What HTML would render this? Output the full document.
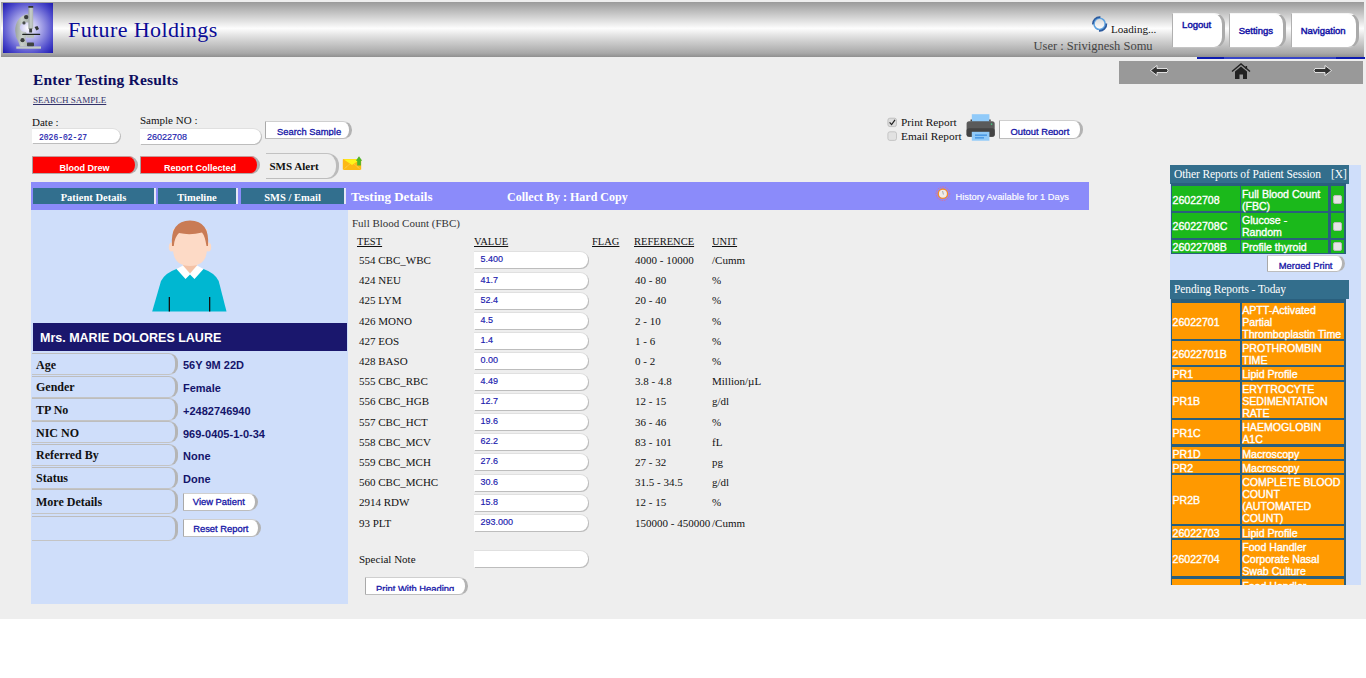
<!DOCTYPE html>
<html><head><meta charset="utf-8">
<style>
*{box-sizing:border-box;margin:0;padding:0}
html,body{width:1366px;height:678px;overflow:hidden;background:#fff;font-family:"Liberation Serif",serif}
.a{position:absolute}
#page{position:absolute;left:0;top:0;width:1366px;height:619px;background:#eeeeee}
#hdr{left:1px;top:2px;width:1363px;height:55px;background:linear-gradient(#a9a9a9 0%,#d8d8d8 25%,#ffffff 50%,#d0d0d0 75%,#9c9c9c 100%)}
#logo{left:3px;top:3px;width:50px;height:50px;background:radial-gradient(circle at 50% 50%,#ffffff 0%,#b9b7ee 30%,#4d4acb 75%,#1d19b0 100%)}
#hdr{background:linear-gradient(#9a9a9a 0%,#b3b3b3 12%,#fdfdfd 48%,#d5d5d5 68%,#a8a8a8 93%,#8f8f8f 100%)!important}
.ttl{left:68px;top:17px;font-size:22px;letter-spacing:0.4px;color:#0a0a96;white-space:nowrap}
.btn{background:#fff;border-radius:0 11px 11px 0;border-left:1px solid #b0b0b0;border-top:1px solid #f4f4f4;border-bottom:1px solid #c4c4c4;border-right:3px solid #aaaaaa;font-family:"Liberation Sans",sans-serif;color:#1414a6;font-size:9.5px;-webkit-text-stroke:0.45px #1414a6;text-align:center;overflow:hidden}
.sb{background:#fff;border-left:1px solid #a9a9a9;border-top:1px solid #cfcfcf;border-bottom:1px solid #bdbdbd;border-right:3px solid #b3b3b3}
.sbt{font-family:"Liberation Sans",sans-serif;color:#1414a6;font-size:9.4px;line-height:1.117;-webkit-text-stroke:0.3px #1414a6;white-space:nowrap}
.sbtn{background:#fff;border-top:1px solid #ddd;border-left:1px solid #ccc;border-radius:0 9px 9px 0;box-shadow:2px 1px 0 #b4b4b4;font-family:"Liberation Sans",sans-serif;color:#1515a8;font-size:9px;-webkit-text-stroke:0.3px #1515a8;text-align:center;overflow:hidden;white-space:nowrap}
.inp{background:#fff;border-radius:0 8px 8px 0;border-top:1px solid #e0e0e0;box-shadow:1px 1px 0.6px #bdbdbd;font-family:"Liberation Sans",sans-serif;color:#1a1aae;-webkit-text-stroke:0.15px #1a1aae;font-size:9px;overflow:hidden;white-space:nowrap}
.lbl{font-size:11px;color:#111;white-space:nowrap}
.rb{background:#f00;border-left:1px solid #a9a0a0;border-top:1px solid #c79a9a;border-bottom:1px solid #b5a8a8;border-right:3px solid #b0b0b0}
.rbt{font-family:"Liberation Sans",sans-serif;font-weight:bold;font-size:9px;line-height:1.117;color:#fff;white-space:nowrap}
.red{background:#f00;border-radius:0 9px 9px 0;box-shadow:2px 1px 0 #a8a8a8;border-top:1px solid #c00;border-left:1px solid #c44;color:#fff;font-family:"Liberation Sans",sans-serif;font-weight:bold;font-size:9px;text-align:center;overflow:hidden;white-space:nowrap}
#tabs{left:31px;top:182px;width:1058px;height:28px;background:#8b8bfa}
.tab{top:187.5px;height:16.5px;background:#326f8e;color:#fff;font-weight:bold;font-size:10.5px;text-align:center;line-height:20px;border-right:2px solid #e6e6f6;white-space:nowrap}
#lp{left:31px;top:210px;width:317px;height:394px;background:#cfdefa}
#nm{left:33px;top:324px;width:314px;height:28px;background:#1a176d;color:#fff;font-family:"Liberation Sans",sans-serif;font-weight:bold;font-size:12.5px;line-height:30px;padding-left:7px;white-space:nowrap}
.row{left:32px;width:145.5px;border-top:1.5px solid #bdbdbd;border-right:3px solid #b5b5b5;border-bottom:1.5px solid #c4c4c4;border-radius:0 9px 9px 0;font-weight:bold;font-size:12px;color:#111;padding-left:4px;padding-top:1.5px;white-space:nowrap}
.val{left:183px;font-family:"Liberation Sans",sans-serif;font-weight:bold;font-size:11px;color:#14146a;white-space:nowrap;margin-top:3px}
.tr{font-size:11px;color:#111;white-space:nowrap}
.trr{margin-top:3px}
.hd{font-size:10.5px;color:#111;text-decoration:underline;white-space:nowrap;margin-top:0.5px}
.vi{left:474px;width:114px;height:17px;line-height:14.5px;padding-left:6.5px;margin-top:-0.6px}
#rp{left:1170px;top:165px;width:191px;height:420px;background:#cfdefa;overflow:hidden}
.rh{left:1170px;width:179px;height:19px;background:#336e8c;color:#fff;font-size:11.5px;line-height:19px;padding-left:4px;white-space:nowrap;letter-spacing:-0.1px}
table.rt{position:absolute;border-collapse:separate;border-spacing:2px;background:#28607c;font-family:"Liberation Sans",sans-serif;font-size:10.6px;color:#fff;line-height:12px;-webkit-text-stroke:0.25px #fff}
table.rt td{padding:0 0 0 1px;vertical-align:middle}
.cl{font-family:"Liberation Sans",sans-serif;font-size:10.6px;color:#fff;line-height:12px;-webkit-text-stroke:0.35px #fff;white-space:nowrap;padding-left:0.5px}
.g1{background:#1bb91b}
.o1{background:#ff9900}
.cb{display:inline-block;width:9px;height:9px;border-radius:2px;background:#e4e4e4;border:1px solid #bbb}
</style></head><body>
<div id="page">
<div class="a" id="hdr"></div>
<div class="a" id="logo"><svg width="50" height="50" viewBox="3 3 50 50" style="position:absolute;left:0;top:0">
<defs><linearGradient id="mg" x1="0" x2="1" y1="0" y2="0"><stop offset="0" stop-color="#9aa29d"/><stop offset="0.5" stop-color="#c9d0cb"/><stop offset="1" stop-color="#aab2ad"/></linearGradient></defs>
<path d="M28.5 13.7 Q22 15 19 19 Q15 24 15.2 31 Q15.3 37 18.5 42 L20 46.5 L27.5 46.5 L27 42.5 Q25.5 41 25.5 38 L27 35 L26 32 Q20.5 32 19.8 27.5 Q20.5 23 25 22.5 L28.6 22.5 Z" fill="url(#mg)"/>
<rect x="16.3" y="46.4" width="24.7" height="2.3" fill="#c3cbc6"/>
<rect x="27" y="42.5" width="7" height="3.8" rx="0.8" fill="#3e4240"/>
<rect x="28.4" y="6.5" width="4.8" height="22.5" fill="url(#mg)"/>
<rect x="28.3" y="5.9" width="5" height="1.9" rx="0.5" fill="#2e3230"/>
<rect x="29.2" y="28.5" width="2.9" height="4" fill="#3a3e3c"/>
<rect x="22.2" y="33.7" width="18" height="1.4" rx="0.6" fill="#1e2220"/>
<rect x="26.6" y="35.1" width="7.4" height="2.6" fill="#b8c0bb"/>
<circle cx="26.2" cy="17.1" r="2.2" fill="#3a3e3c"/>
<circle cx="24" cy="22.9" r="1.6" fill="#4a4e4c"/>
<circle cx="22.5" cy="40.2" r="2.1" fill="#3a3e3c"/>
<path d="M34.5 27 L37.5 26 L39 29 L36.5 30.5 Z" fill="#333735"/>
</svg></div>
<div class="a ttl">Future Holdings</div>

<svg class="a" style="left:1091px;top:16px" width="18" height="17" viewBox="1091 16 18 17">
<circle cx="1099.6" cy="23.9" r="5.6" fill="none" stroke="#5ea2e0" stroke-width="1.6"/>
<path d="M1092.9 24.4 A6.8 6.8 0 0 1 1100.4 17.1" fill="none" stroke="#2b5a9e" stroke-width="1.7"/>
<path d="M1106.4 23.5 A6.8 6.8 0 0 1 1099 30.8" fill="none" stroke="#2b5a9e" stroke-width="1.7"/>
</svg>
<div class="a" style="left:1111px;top:23px;font-size:11.1px;color:#111;white-space:nowrap">Loading...</div>
<div class="a" style="left:1033.5px;top:38.5px;font-size:12.5px;color:#444;white-space:nowrap">User : Srivignesh Somu</div>

<div class="a btn" style="left:1172.3px;top:12.9px;width:52.7px;height:35.6px;padding-top:4.8px;padding-right:2px">Logout</div>
<div class="a btn" style="left:1228.8px;top:12.9px;width:57.2px;height:35.6px;padding-top:11.4px;padding-right:1px">Settings</div>
<div class="a btn" style="left:1290.6px;top:12.9px;width:68.1px;height:35.6px;padding-top:11.4px;padding-right:1px">Navigation</div>
<div class="a" style="left:1197px;top:57px;width:168px;height:1.6px;background:linear-gradient(90deg,#0d1bb0 0,#0d1bb0 16%,#3745c8 16%,#3745c8 83%,#0d1bb0 83%)"></div>
<div class="a" style="left:1119px;top:61px;width:244px;height:23px;background:#999"></div>
<svg class="a" style="left:1119px;top:61px" width="244" height="23" viewBox="1119 61 244 23">
<path d="M1150.5 70.5 L1157 65.5 L1157 68.5 L1167 68.5 Q1169 70.5 1167 72.5 L1157 72.5 L1157 75.5 Z" fill="#333" stroke="#fff" stroke-width="0.8" stroke-linejoin="round"/>
<path d="M1331.5 70.5 L1325 65.5 L1325 68.5 L1315 68.5 Q1313 70.5 1315 72.5 L1325 72.5 L1325 75.5 Z" fill="#333" stroke="#fff" stroke-width="0.8" stroke-linejoin="round"/>
<path d="M1232 71.5 L1241 64 L1250 71.5" fill="none" stroke="#222" stroke-width="1.4"/>
<rect x="1245.5" y="66" width="1.6" height="3" fill="#222"/>
<path d="M1235 71.5 L1241 66.5 L1247 71.5 L1247 79 L1243 79 L1243 74.5 L1239.5 74.5 L1239.5 79 L1235 79 Z" fill="#222"/>
</svg>

<div class="a" style="left:33px;top:71px;font-size:15.5px;font-weight:bold;color:#0d0d5e;letter-spacing:0.2px;white-space:nowrap">Enter Testing Results</div>
<div class="a" style="left:33px;top:94.5px;font-size:9px;color:#33336b;text-decoration:underline;white-space:nowrap">SEARCH SAMPLE</div>

<div class="a lbl" style="left:32px;top:116px">Date :</div>
<div class="a inp" style="left:32px;top:128px;width:88px;height:15px;padding-left:7px;line-height:20px;font-family:'Liberation Mono',monospace;font-size:8px"><span style="display:inline-block;transform:scale(1,1.18);transform-origin:0 13.5px;position:relative;top:-1.5px">2026-02-27</span></div>
<div class="a lbl" style="left:140px;top:114px">Sample NO :</div>
<div class="a inp" style="left:140px;top:128px;width:121px;height:16px;padding-left:7px;line-height:17px">26022708</div>
<div class="a sb" style="left:265px;top:121px;width:87.0px;height:17.6px;border-radius:0 8.8px 8.8px 0"></div><div class="a" style="left:275px;top:122px;width:83.0px;height:13.5px;overflow:hidden"><div class="sbt" style="position:absolute;left:2px;top:5.09px">Search Sample</div></div>

<div class="a rb" style="left:31.8px;top:156.4px;width:106.2px;height:18.0px;border-radius:0 9.0px 9.0px 0"></div><div class="a" style="left:57.5px;top:157.4px;width:102.2px;height:13.9px;overflow:hidden"><div class="rbt" style="position:absolute;left:2px;top:5.85px">Blood Drew</div></div>
<div class="a rb" style="left:140.4px;top:156.4px;width:119.6px;height:18.1px;border-radius:0 9.0px 9.0px 0"></div><div class="a" style="left:161.9px;top:157.4px;width:115.6px;height:13.9px;overflow:hidden"><div class="rbt" style="position:absolute;left:2px;top:5.85px">Report Collected</div></div>
<div class="a" style="left:266px;top:153px;width:73px;height:25.5px;border-top:1px solid #c2c2c2;border-right:3px solid #bbb;border-bottom:1.5px solid #bdbdbd;border-radius:0 12px 12px 0;font-size:11px;font-weight:bold;color:#111;line-height:24px;padding-left:3.5px;white-space:nowrap">SMS Alert</div>
<svg class="a" style="left:340px;top:154px" width="24" height="19" viewBox="340 154 24 19">
<rect x="342.8" y="159" width="18.4" height="11" rx="0.8" fill="#fdb913"/>
<path d="M343.5 159.3 L352 165 L360.5 159.3 Z" fill="#fff51a"/>
<path d="M343.5 169.5 L349.5 164.3 M360.5 169.5 L354.5 164.3" stroke="#ffe79a" stroke-width="0.6" stroke-dasharray="1 0.8"/>
<path d="M359 156.3 L362.2 160.7 L360.9 160.7 L360.9 165.5 L357.2 165.5 L357.2 160.7 L355.8 160.7 Z" fill="#4fb52a"/>
</svg>

<svg class="a" style="left:880px;top:108px" width="120" height="40" viewBox="880 108 120 40">
<rect x="887.9" y="118.2" width="8.6" height="8.4" rx="2" fill="#dcdcdc" stroke="#b8b8b8" stroke-width="0.8"/>
<path d="M889.6 122.3 L891.6 124.6 L895 119.8" fill="none" stroke="#222" stroke-width="1.2"/>
<rect x="887.9" y="131.8" width="8.6" height="8.6" rx="2" fill="#e2e2e2" stroke="#bdbdbd" stroke-width="0.8"/>
<rect x="971.8" y="114.2" width="17.6" height="8" fill="#90caf9"/>
<rect x="970.5" y="119.5" width="1.5" height="2" fill="#444"/>
<rect x="989.2" y="119.5" width="1.5" height="2" fill="#444"/>
<rect x="966.6" y="121.2" width="28.1" height="15.6" rx="2.5" fill="#5a5a5a"/>
<rect x="966.6" y="128.2" width="28.1" height="8.6" rx="2.5" fill="#434343"/>
<rect x="990.9" y="123.5" width="1.3" height="1.3" fill="#3ddc84"/>
<rect x="971.8" y="131.8" width="17.6" height="8.9" fill="#90caf9"/>
<rect x="975" y="134.5" width="12" height="1.3" fill="#3d8fe0"/>
<rect x="975" y="137.2" width="9" height="1.3" fill="#3d8fe0"/>
</svg>
<div class="a" style="left:901px;top:116px;font-size:11.3px;color:#111;white-space:nowrap">Print Report</div>
<div class="a" style="left:901px;top:130px;font-size:11.3px;color:#111;white-space:nowrap">Email Report</div>
<div class="a sb" style="left:999px;top:120.4px;width:84.0px;height:18.2px;border-radius:0 9.1px 9.1px 0"></div><div class="a" style="left:1008.4px;top:121.4px;width:80.0px;height:14.0px;overflow:hidden"><div class="sbt" style="position:absolute;left:2px;top:5.39px">Outout Report</div></div>

<div class="a" id="tabs"></div>
<div class="a tab" style="left:33px;width:123px">Patient Details</div>
<div class="a tab" style="left:158px;width:80px">Timeline</div>
<div class="a tab" style="left:241px;width:105px">SMS / Email</div>
<div class="a" style="left:351px;top:189px;font-size:13px;font-weight:bold;color:#fff;white-space:nowrap">Testing Details</div>
<div class="a" style="left:507px;top:189.5px;font-size:12px;font-weight:bold;color:#fff;white-space:nowrap">Collect By : Hard Copy</div>
<svg class="a" style="left:934px;top:185px" width="18" height="18" viewBox="934 185 18 18">
<circle cx="942.9" cy="193.7" r="6.8" fill="none" stroke="#e86a8a" stroke-width="0.8" stroke-dasharray="1.6 1"/>
<circle cx="942.9" cy="193.7" r="4.7" fill="#f0ebe8" stroke="#f48a2a" stroke-width="1.4"/>
<path d="M942.6 191 L943.4 194.5" stroke="#999" stroke-width="0.8"/>
</svg>
<div class="a" style="left:955.5px;top:192px;font-family:'Liberation Sans',sans-serif;font-size:9.3px;color:#fff;-webkit-text-stroke:0.15px #fff;white-space:nowrap">History Available for 1 Days</div>

<div class="a" id="lp"></div>
<div class="a" id="nm" style="top:323.4px;width:313.6px">Mrs. MARIE DOLORES LAURE</div>
<svg class="a" style="left:140px;top:210px" width="100" height="110" viewBox="140 210 100 110">
<path d="M176.5 269 Q165 273 161 281 L152.2 311.5 L226.5 311.5 L218.7 281 Q215 273 203.5 269 Z" fill="#00b7d1"/>
<path d="M183 256 L197 256 L197 267 L190 274 L183 267 Z" fill="#f4c2a6"/>
<ellipse cx="171.8" cy="247" rx="3" ry="4.5" fill="#fddac6"/>
<ellipse cx="208.2" cy="247" rx="3" ry="4.5" fill="#fddac6"/>
<path d="M173 229 L207 229 L207 250 Q206 266 190 266 Q174 266 173 250 Z" fill="#fddac6"/>
<path d="M172 246 Q170 221 190 220.6 Q210 221 208 246 L206.5 246 Q205 236 202 232.5 Q190 235.5 179 233 Q174.5 237 173.8 246 Z" fill="#c97b55"/>
<path d="M176.5 269 L183 265.5 L190 273.5 L197 265.5 L203.5 269 L194.5 279 L190 274.5 L185.5 279 Z" fill="#ffffff"/>
<rect x="168.7" y="297" width="1.3" height="14.5" fill="#111"/>
<rect x="209" y="297" width="1.3" height="14.5" fill="#111"/>
</svg>

<div class="a row" style="top:353px;height:22.2px;line-height:18px">Age</div>
<div class="a row" style="top:375.7px;height:22.2px;line-height:18px">Gender</div>
<div class="a row" style="top:398.4px;height:22.2px;line-height:18px">TP No</div>
<div class="a row" style="top:421.1px;height:22.2px;line-height:18px">NIC NO</div>
<div class="a row" style="top:443.8px;height:22.2px;line-height:18px">Referred By</div>
<div class="a row" style="top:466.5px;height:22.2px;line-height:18px">Status</div>
<div class="a row" style="top:489.2px;height:24.5px;line-height:21px">More Details</div>
<div class="a row" style="top:515.5px;height:25px"></div>
<div class="a val" style="top:356px">56Y 9M 22D</div>
<div class="a val" style="top:379px">Female</div>
<div class="a val" style="top:401.5px">+2482746940</div>
<div class="a val" style="top:424.5px">969-0405-1-0-34</div>
<div class="a val" style="top:447px">None</div>
<div class="a val" style="top:470px">Done</div>
<div class="a sb" style="left:182.5px;top:492.5px;width:75.5px;height:18.2px;border-radius:0 9.1px 9.1px 0"></div><div class="a" style="left:190.8px;top:493.5px;width:71.5px;height:15.5px;overflow:hidden"><div class="sbt" style="position:absolute;left:2px;top:3.79px">View Patient</div></div>
<div class="a sb" style="left:182.5px;top:518.6px;width:78.5px;height:18.2px;border-radius:0 9.1px 9.1px 0"></div><div class="a" style="left:191.2px;top:519.6px;width:74.5px;height:15.9px;overflow:hidden"><div class="sbt" style="position:absolute;left:2px;top:4.19px">Reset Report</div></div>

<div class="a tr" style="left:352px;top:217px;color:#333">Full Blood Count (FBC)</div>
<div class="a hd" style="left:357px;top:235px">TEST</div>
<div class="a hd" style="left:474px;top:235px">VALUE</div>
<div class="a hd" style="left:592px;top:235px">FLAG</div>
<div class="a hd" style="left:634px;top:235px">REFERENCE</div>
<div class="a hd" style="left:712px;top:235px">UNIT</div>
<div class="a tr trr" style="left:359px;top:251.0px">554 CBC_WBC</div>
<div class="a inp vi" style="top:252.0px">5.400</div>
<div class="a tr trr" style="left:635px;top:251.0px">4000 - 10000</div>
<div class="a tr trr" style="left:712px;top:251.0px">/Cumm</div>
<div class="a tr trr" style="left:359px;top:271.2px">424 NEU</div>
<div class="a inp vi" style="top:272.2px">41.7</div>
<div class="a tr trr" style="left:635px;top:271.2px">40 - 80</div>
<div class="a tr trr" style="left:712px;top:271.2px">%</div>
<div class="a tr trr" style="left:359px;top:291.4px">425 LYM</div>
<div class="a inp vi" style="top:292.4px">52.4</div>
<div class="a tr trr" style="left:635px;top:291.4px">20 - 40</div>
<div class="a tr trr" style="left:712px;top:291.4px">%</div>
<div class="a tr trr" style="left:359px;top:311.6px">426 MONO</div>
<div class="a inp vi" style="top:312.6px">4.5</div>
<div class="a tr trr" style="left:635px;top:311.6px">2 - 10</div>
<div class="a tr trr" style="left:712px;top:311.6px">%</div>
<div class="a tr trr" style="left:359px;top:331.8px">427 EOS</div>
<div class="a inp vi" style="top:332.8px">1.4</div>
<div class="a tr trr" style="left:635px;top:331.8px">1 - 6</div>
<div class="a tr trr" style="left:712px;top:331.8px">%</div>
<div class="a tr trr" style="left:359px;top:352.0px">428 BASO</div>
<div class="a inp vi" style="top:353.0px">0.00</div>
<div class="a tr trr" style="left:635px;top:352.0px">0 - 2</div>
<div class="a tr trr" style="left:712px;top:352.0px">%</div>
<div class="a tr trr" style="left:359px;top:372.2px">555 CBC_RBC</div>
<div class="a inp vi" style="top:373.2px">4.49</div>
<div class="a tr trr" style="left:635px;top:372.2px">3.8 - 4.8</div>
<div class="a tr trr" style="left:712px;top:372.2px">Million/&micro;L</div>
<div class="a tr trr" style="left:359px;top:392.4px">556 CBC_HGB</div>
<div class="a inp vi" style="top:393.4px">12.7</div>
<div class="a tr trr" style="left:635px;top:392.4px">12 - 15</div>
<div class="a tr trr" style="left:712px;top:392.4px">g/dl</div>
<div class="a tr trr" style="left:359px;top:412.6px">557 CBC_HCT</div>
<div class="a inp vi" style="top:413.6px">19.6</div>
<div class="a tr trr" style="left:635px;top:412.6px">36 - 46</div>
<div class="a tr trr" style="left:712px;top:412.6px">%</div>
<div class="a tr trr" style="left:359px;top:432.8px">558 CBC_MCV</div>
<div class="a inp vi" style="top:433.8px">62.2</div>
<div class="a tr trr" style="left:635px;top:432.8px">83 - 101</div>
<div class="a tr trr" style="left:712px;top:432.8px">fL</div>
<div class="a tr trr" style="left:359px;top:453.0px">559 CBC_MCH</div>
<div class="a inp vi" style="top:454.0px">27.6</div>
<div class="a tr trr" style="left:635px;top:453.0px">27 - 32</div>
<div class="a tr trr" style="left:712px;top:453.0px">pg</div>
<div class="a tr trr" style="left:359px;top:473.2px">560 CBC_MCHC</div>
<div class="a inp vi" style="top:474.2px">30.6</div>
<div class="a tr trr" style="left:635px;top:473.2px">31.5 - 34.5</div>
<div class="a tr trr" style="left:712px;top:473.2px">g/dl</div>
<div class="a tr trr" style="left:359px;top:493.4px">2914 RDW</div>
<div class="a inp vi" style="top:494.4px">15.8</div>
<div class="a tr trr" style="left:635px;top:493.4px">12 - 15</div>
<div class="a tr trr" style="left:712px;top:493.4px">%</div>
<div class="a tr trr" style="left:359px;top:513.6px">93 PLT</div>
<div class="a inp vi" style="top:514.6px">293.000</div>
<div class="a tr trr" style="left:635px;top:513.6px">150000 - 450000</div>
<div class="a tr trr" style="left:712px;top:513.6px">/Cumm</div><div class="a tr trr" style="left:359px;top:550px">Special Note</div>
<div class="a inp vi" style="top:551px;height:17px"></div>
<div class="a sb" style="left:365px;top:577.2px;width:102.6px;height:17.6px;border-radius:0 8.8px 8.8px 0"></div><div class="a" style="left:374.1px;top:578.2px;width:98.6px;height:13.1px;overflow:hidden"><div class="sbt" style="position:absolute;left:2px;top:5.59px">Print With Heading</div></div>

<div class="a" id="rp"></div>
<div class="a rh" style="top:165px">Other Reports of Patient Session <span style="position:absolute;left:161px">[X]</span></div>
<div class="a" style="left:1170.8px;top:182.5px;width:175px;height:71.5px;background:#2a5f7d"></div>
<div class="a cl g1" style="left:1172px;top:185.9px;width:68.2px;height:25.5px;padding-top:8px">26022708</div>
<div class="a cl g1" style="left:1241.4px;top:185.9px;width:87px;height:25.5px;padding-top:2.1px">Full Blood Count<br>(FBC)</div>
<div class="a g1" style="left:1330.6px;top:185.9px;width:13.7px;height:25.5px"><span class="cb" style="position:absolute;left:2.6px;top:9.3px"></span></div>
<div class="a cl g1" style="left:1172px;top:213.2px;width:68.2px;height:24.9px;padding-top:7.1px">26022708C</div>
<div class="a cl g1" style="left:1241.4px;top:213.2px;width:87px;height:24.9px;padding-top:1.1px">Glucose -<br>Random</div>
<div class="a g1" style="left:1330.6px;top:213.2px;width:13.7px;height:24.9px"><span class="cb" style="position:absolute;left:2.6px;top:8.8px"></span></div>
<div class="a cl g1" style="left:1172px;top:240px;width:68.2px;height:12.7px;padding-top:1px">26022708B</div>
<div class="a cl g1" style="left:1241.4px;top:240px;width:87px;height:12.7px;padding-top:1px">Profile thyroid</div>
<div class="a g1" style="left:1330.6px;top:240px;width:13.7px;height:12.7px"><span class="cb" style="position:absolute;left:2.6px;top:2.1px"></span></div>
<div class="a sb" style="left:1267.2px;top:254.6px;width:77.8px;height:17.8px;border-radius:0 8.9px 8.9px 0"></div><div class="a" style="left:1276.8px;top:255.6px;width:73.8px;height:13.3px;overflow:hidden"><div class="sbt" style="position:absolute;left:2px;top:5.19px">Merged Print</div></div>
<div class="a rh" style="top:280px">Pending Reports - Today</div>
<div class="a" style="left:1170px;top:299px;width:177px;height:286px;overflow:hidden">
<div class="a" style="left:0.8px;top:0;width:175px;height:290px;background:#2a5f7d"></div>
<div class="a cl o1" style="left:2px;top:3.5px;width:68.2px;height:36.3px;line-height:36.3px;padding-top:1px">26022701</div>
<div class="a cl o1" style="left:71.7px;top:3.5px;width:102.5px;padding-top:1.2px;height:36.3px">APTT-Activated<br>Partial<br>Thromboplastin Time</div>
<div class="a cl o1" style="left:2px;top:41.9px;width:68.2px;height:24.3px;line-height:24.3px;padding-top:1px">26022701B</div>
<div class="a cl o1" style="left:71.7px;top:41.9px;width:102.5px;padding-top:1.2px;height:24.3px">PROTHROMBIN<br>TIME</div>
<div class="a cl o1" style="left:2px;top:68.3px;width:68.2px;height:12.3px;line-height:12.3px;padding-top:1px">PR1</div>
<div class="a cl o1" style="left:71.7px;top:68.3px;width:102.5px;padding-top:1.2px;height:12.3px">Lipid Profile</div>
<div class="a cl o1" style="left:2px;top:82.7px;width:68.2px;height:36.3px;line-height:36.3px;padding-top:1px">PR1B</div>
<div class="a cl o1" style="left:71.7px;top:82.7px;width:102.5px;padding-top:1.2px;height:36.3px">ERYTROCYTE<br>SEDIMENTATION<br>RATE</div>
<div class="a cl o1" style="left:2px;top:121.1px;width:68.2px;height:24.3px;line-height:24.3px;padding-top:1px">PR1C</div>
<div class="a cl o1" style="left:71.7px;top:121.1px;width:102.5px;padding-top:1.2px;height:24.3px">HAEMOGLOBIN<br>A1C</div>
<div class="a cl o1" style="left:2px;top:147.5px;width:68.2px;height:12.3px;line-height:12.3px;padding-top:1px">PR1D</div>
<div class="a cl o1" style="left:71.7px;top:147.5px;width:102.5px;padding-top:1.2px;height:12.3px">Macroscopy</div>
<div class="a cl o1" style="left:2px;top:161.9px;width:68.2px;height:12.3px;line-height:12.3px;padding-top:1px">PR2</div>
<div class="a cl o1" style="left:71.7px;top:161.9px;width:102.5px;padding-top:1.2px;height:12.3px">Macroscopy</div>
<div class="a cl o1" style="left:2px;top:176.3px;width:68.2px;height:48.3px;line-height:48.3px;padding-top:1px">PR2B</div>
<div class="a cl o1" style="left:71.7px;top:176.3px;width:102.5px;padding-top:1.2px;height:48.3px">COMPLETE BLOOD<br>COUNT<br>(AUTOMATED<br>COUNT)</div>
<div class="a cl o1" style="left:2px;top:226.7px;width:68.2px;height:12.3px;line-height:12.3px;padding-top:1px">26022703</div>
<div class="a cl o1" style="left:71.7px;top:226.7px;width:102.5px;padding-top:1.2px;height:12.3px">Lipid Profile</div>
<div class="a cl o1" style="left:2px;top:241.1px;width:68.2px;height:36.3px;line-height:36.3px;padding-top:1px">26022704</div>
<div class="a cl o1" style="left:71.7px;top:241.1px;width:102.5px;padding-top:1.2px;height:36.3px">Food Handler<br>Corporate Nasal<br>Swab Culture</div>
<div class="a cl o1" style="left:2px;top:279.5px;width:68.2px;height:36.3px;line-height:36.3px;padding-top:1px">26022705</div>
<div class="a cl o1" style="left:71.7px;top:279.5px;width:102.5px;padding-top:1.2px;height:36.3px">Food Handler<br>Corporate Nasal<br>Swab Culture</div>
</div>

</div>
</body></html>
